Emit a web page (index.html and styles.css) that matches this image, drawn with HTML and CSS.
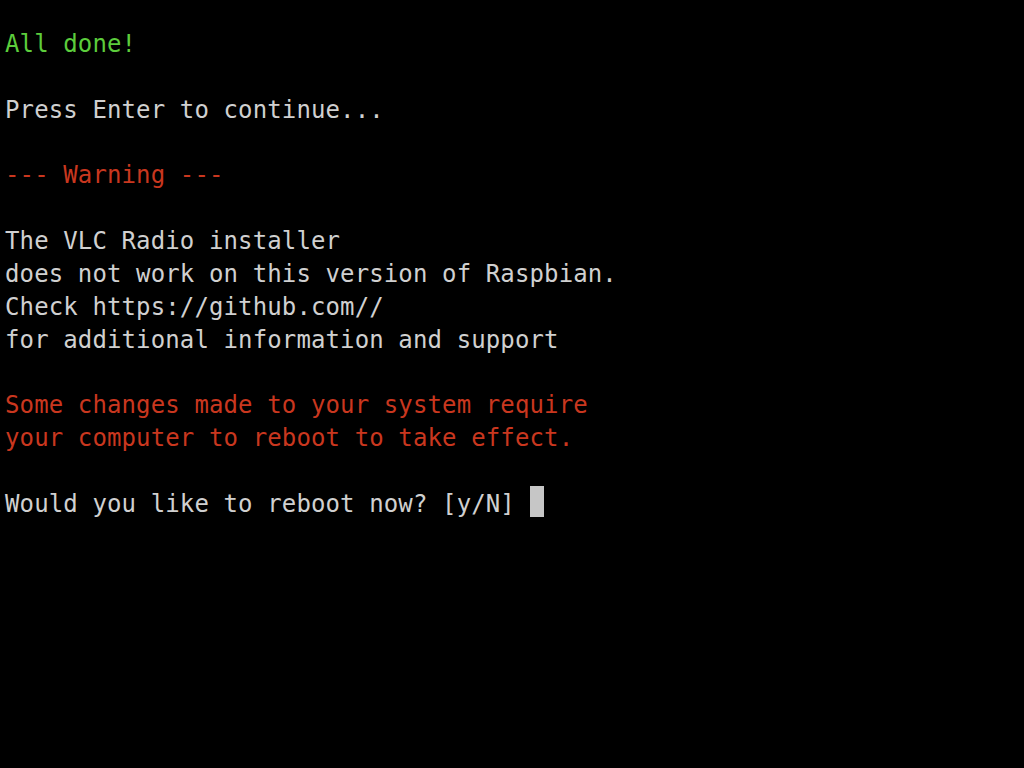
FILE: index.html
```html
<!DOCTYPE html>
<html lang="en">
<head>
  <meta charset="UTF-8">
  <meta name="viewport" content="width=device-width, initial-scale=1.0">
  <title>Terminal</title>
  <link rel="stylesheet" href="styles.css">
</head>
<body>
  <div class="terminal">
    <!-- 输出 -->
    <div class="line ok">All done!</div>
    <div class="line blank"></div>
    <div class="line">Press Enter to continue...</div>
    <div class="line blank"></div>
    <div class="line warn">--- Warning ---</div>
    <div class="line blank"></div>
    <div class="line">The VLC Radio installer</div>
    <div class="line">does not work on this version of Raspbian.</div>
    <div class="line">Check https://github.com//</div>
    <div class="line">for additional information and support</div>
    <div class="line blank"></div>
    <div class="line warn">Some changes made to your system require</div>
    <div class="line warn">your computer to reboot to take effect.</div>
    <div class="line blank"></div>
    <!-- 提示 + 光标 -->
    <div class="line prompt">Would you like to reboot now? [y/N] <span class="cursor"></span></div>
  </div>
</body>
</html>
```

FILE: styles.css
```css
/* 重置样式 */
* {
  margin: 0;
  padding: 0;
  box-sizing: border-box;
}
html, body {
  height: 100%;
  background-color: #000;
}
/* 终端容器 */
.terminal {
  padding: 28px 5px;
  color: #d0d0d0;
  font-family: "DejaVu Sans Mono", "Liberation Mono", monospace;
  font-size: 24px;
  letter-spacing: 0.12px;
  line-height: 32.86px;
}
.line {
  height: 32.86px;
  white-space: pre;
}
.ok {
  color: #5ccd3c;
}
.warn {
  color: #c9371f;
}
.prompt {
  display: flex;
  align-items: center;
}
.cursor {
  display: inline-block;
  width: 14.5px;
  height: 31px;
  margin-top: -6px;
  background-color: #c6c6c6;
}
```
